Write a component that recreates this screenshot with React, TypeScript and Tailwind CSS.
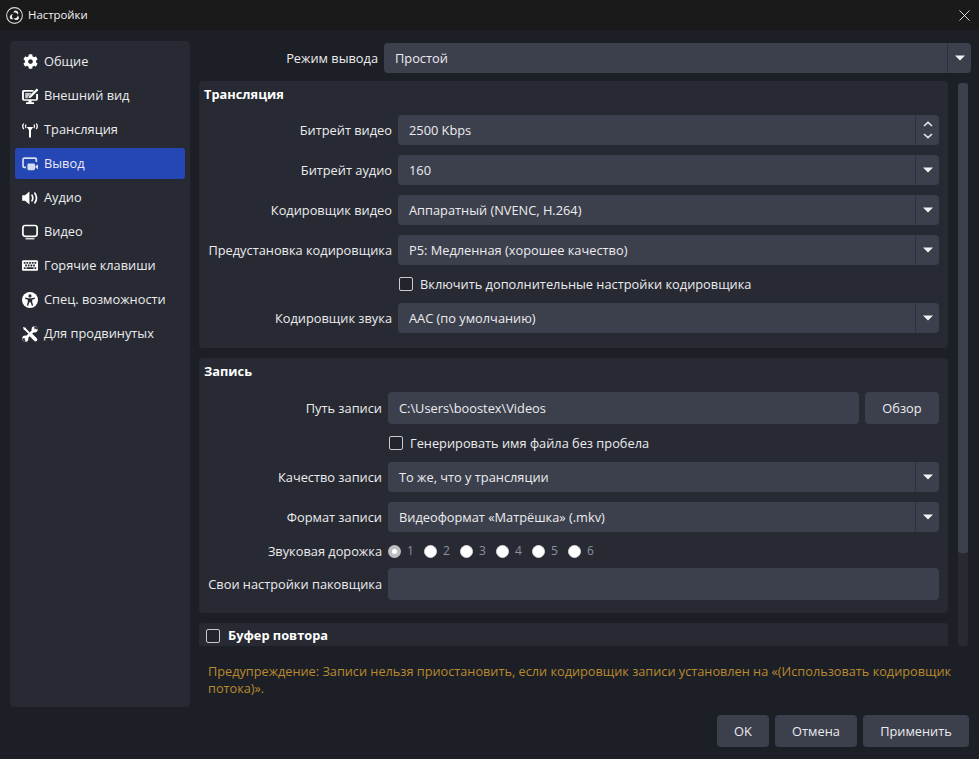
import type { ReactNode } from 'react';
import { FaCog, FaKeyboard } from 'react-icons/fa';

const ObsLogo = () => (
  <svg viewBox="0 0 32 32" className="w-[17px] h-[17px]" fill="none">
    <circle cx="16" cy="16" r="14.800" stroke="#d8d8d8" strokeWidth="2" />
    <path d="M17.500 6.500c3-.3 5.500 1.800 5.700 4.600.1 1.300-.3 2.500-1.100 3.400-.5-2.400-2.500-4.200-5.100-4.300-1.200-.1-2.300.2-3.200.8.600-2.300 1.900-4.300 3.700-4.500z" fill="#ececec" />
    <path d="M7.700 21.600c-1.400-2.700-.5-5.800 1.900-7.200 1.100-.7 2.400-.8 3.600-.6-1.900 1.600-2.600 4.200-1.400 6.600.5 1.100 1.400 1.900 2.400 2.400-2.300.8-5.600.4-6.500-1.200z" fill="#ececec" />
    <path d="M24.100 21.900c-1.600 2.500-4.800 3.300-7.200 1.900-1.100-.6-1.900-1.600-2.300-2.700 2.400.8 5 0 6.400-2.200.7-1 1-2.200.9-3.400 1.800 1.800 3.100 4.700 2.200 6.400z" fill="#ececec" />
  </svg>
);

const AppearanceIcon = () => (
  <svg viewBox="0 0 16 16" className="w-[16px] h-[16px]">
    <path d="M2 2h9.500v1.700H2.500a.6.6 0 0 0-.6.6v6.400c0 .3.300.6.600.6h11a.6.6 0 0 0 .6-.6V6H16v4.900a1.800 1.800 0 0 1-1.800 1.800H9.500V14.300H12V16H4v-1.700h2.500v-1.600H1.800A1.800 1.800 0 0 1 0 10.900V3.800A1.800 1.800 0 0 1 2 2z" fill="#fff" />
    <path d="M3.200 5h6.500l-3.200 3.300-.9 2H3.200z" fill="#c4c5c9" />
    <path d="M14.800.4 7.400 7.800l-.9 2.500 2.500-.9 7.400-7.400z" fill="#fff" />
  </svg>
);

const StreamIcon = () => (
  <svg viewBox="0 0 16 16" className="w-[16px] h-[16px]" fill="none" stroke="#fff">
    <path d="M4.800 5h6.400L9 8.300V15.500H7V8.300z" fill="#fff" stroke="none" />
    <path d="M4 2.500c-.8 1.200-.8 2.500 0 3.700M12 2.500c.8 1.200.8 2.500 0 3.700" strokeWidth="1.300" />
    <path d="M1.700 1.500C.4 3.400.4 5.300 1.700 7.200M14.300 1.500c1.300 1.900 1.300 3.800 0 5.700" strokeWidth="1.300" />
  </svg>
);

const OutputIcon = () => (
  <svg viewBox="0 0 16 16" className="w-[16px] h-[16px]" fill="#d5ddf2">
    <path d="M2.200 1.200h11a2 2 0 0 1 2 2V6h-1.700V3.500a.6.6 0 0 0-.6-.6H2.500a.6.6 0 0 0-.6.6v6.400c0 .3.300.6.600.6H4v1.700H2.200a2 2 0 0 1-2-2V3.200a2 2 0 0 1 2-2z" />
    <rect x="5.400" y="7.400" width="7.600" height="6.800" rx="1.400" />
    <path d="M13.400 10 16 8.400v4.800l-2.600-1.600z" />
  </svg>
);

const AudioIcon = () => (
  <svg viewBox="0 0 16 16" className="w-[16px] h-[16px]" fill="none">
    <path d="M.2 5.200h2.800L7.400 1.600v12.800L3 10.800H.2z" fill="#fff" />
    <path d="M10 5.200c1 1.800 1 3.800 0 5.600M12.900 3.200c2 3 2 6.600 0 9.600" stroke="#fff" strokeWidth="1.700" strokeLinecap="round" />
  </svg>
);

const VideoIcon = () => (
  <svg viewBox="0 0 16 16" className="w-[16px] h-[16px]" fill="none">
    <rect x=".9" y="1.500" width="14.200" height="10.800" rx="2.200" stroke="#fff" strokeWidth="1.700" />
    <path d="M3.600 14.800h8.800" stroke="#fff" strokeWidth="1.200" />
  </svg>
);

const AccessIcon = () => (
  <svg viewBox="0 0 16 16" className="w-[16px] h-[16px]">
    <circle cx="8" cy="8" r="8" fill="#fff" />
    <circle cx="8" cy="3.900" r="1.600" fill="#272a33" />
    <path d="M3.400 5.500 6.400 6.300h3.200l3-.8.4 1.300-2.800.9v2.200l1 3.500-1.300.4-1.300-3.500h-1.200l-1.300 3.500-1.300-.4 1-3.500V7.700l-2.800-.9z" fill="#272a33" />
  </svg>
);

const AdvancedIcon = () => (
  <svg viewBox="0 0 16 16" className="w-[16px] h-[16px]" fill="none">
    <path d="M2.500 2.500 13 13" stroke="#fff" strokeWidth="2" />
    <path d="M9.500 9.500 13.500 13.500" stroke="#fff" strokeWidth="3.600" strokeLinecap="round" />
    <path d="M1 1l2.800.8L3.800 3.800 1.800 3.800z" fill="#fff" />
    <path d="M3.500 12.500 12.500 3.500" stroke="#fff" strokeWidth="2.600" />
    <circle cx="12.700" cy="3.300" r="3.100" fill="#fff" />
    <circle cx="3.300" cy="12.700" r="3.100" fill="#fff" />
    <path d="M12.600 3.400 15.500 .5h-3.300z" fill="#272a33" />
    <path d="M13 3 15.800 .2v3.200z" fill="#272a33" />
    <path d="M3.400 12.600.5 15.500v-3.300z" fill="#272a33" />
    <path d="M3 13 .2 15.800h3.200z" fill="#272a33" />
  </svg>
);

const navItems = [
  { label: 'Общие', icon: <FaCog className="w-[15px] h-[15px] text-white" /> },
  { label: 'Внешний вид', icon: <AppearanceIcon /> },
  { label: 'Трансляция', icon: <StreamIcon /> },
  { label: 'Вывод', icon: <OutputIcon />, active: true },
  { label: 'Аудио', icon: <AudioIcon /> },
  { label: 'Видео', icon: <VideoIcon /> },
  { label: 'Горячие клавиши', icon: <FaKeyboard className="w-[17px] h-[17px] text-white" /> },
  { label: 'Спец. возможности', icon: <AccessIcon /> },
  { label: 'Для продвинутых', icon: <AdvancedIcon /> },
];

const Caret = () => (
  <svg viewBox="0 0 10 6" className="w-[10px] h-[6px]" fill="#f2f2f2">
    <path d="M0 .4h10L5 5.600z" />
  </svg>
);

const Select = ({ value }: { value: string }) => (
  <div className="flex-1 h-[30px] flex items-stretch bg-[#3c404d] rounded-[4px]">
    <div className="flex-1 flex items-center pl-[11px] pt-[1px] text-[#ececee]">{value}</div>
    <div className="w-[24px] flex items-center justify-center border-l border-[#2f323c]">
      <Caret />
    </div>
  </div>
);

const Spin = ({ value }: { value: string }) => (
  <div className="flex-1 h-[30px] flex items-stretch bg-[#3c404d] rounded-[4px]">
    <div className="flex-1 flex items-center pl-[11px] pt-[1px] text-[#ececee]">{value}</div>
    <div className="w-[24px] flex flex-col items-center justify-center gap-[6px] border-l border-[#2f323c]">
      <svg viewBox="0 0 10 6" className="w-[10px] h-[6px]" fill="none" stroke="#e6e6ea" strokeWidth="1.600">
        <path d="M1 5l4-3.600L9 5" />
      </svg>
      <svg viewBox="0 0 10 6" className="w-[10px] h-[6px]" fill="none" stroke="#e6e6ea" strokeWidth="1.600">
        <path d="M1 1l4 3.600L9 1" />
      </svg>
    </div>
  </div>
);

const Row = ({ label, width, children }: { label: string; width: string; children: ReactNode }) => (
  <div className="flex items-center gap-[6px]">
    <div className={`${width} shrink-0 text-right text-[#ececee] whitespace-nowrap leading-[18px]`}>{label}</div>
    {children}
  </div>
);

const Checkbox = () => <span className="w-[14px] h-[14px] rounded-[2px] bg-[#23252d] border border-[#c9c9ce] shrink-0" />;

const Radio = ({ n, checked }: { n: number; checked?: boolean }) => (
  <div className="flex items-center gap-[6px] text-[#8d919c]">
    <span
      className={
        checked
          ? 'w-[13px] h-[13px] rounded-full bg-[#bdbdc2] flex items-center justify-center'
          : 'w-[13px] h-[13px] rounded-full bg-white border border-[#d8d8dc]'
      }
    >
      {checked && <span className="block w-[5px] h-[5px] rounded-full bg-white" />}
    </span>
    <span className="w-[9px]">{n}</span>
  </div>
);

export default function App() {
  return (
    <div className="w-[979px] h-[759px] overflow-hidden flex flex-col bg-[#1d1f26] text-[12.8px] text-white font-['Open_Sans',sans-serif]">
      {/* Title bar */}
      <div className="h-[30px] shrink-0 bg-[#1a1a1a] flex items-center pl-[6px] pr-[9px] gap-[5px]">
        <ObsLogo />
        <span className="text-[11.4px] text-[#f2f2f2]">Настройки</span>
        <svg viewBox="0 0 12 12" className="ml-auto w-[11px] h-[11px]" fill="none" stroke="#e8e8e8" strokeWidth="1">
          <path d="M.5.5l11 11M11.500.5l-11 11" />
        </svg>
      </div>

      <div className="flex-1 flex pt-[11px] pl-[10px] min-h-0">
        {/* Sidebar */}
        <div className="w-[180px] h-[666px] shrink-0 bg-[#272a33] rounded-[4px] px-[5px] pt-[5px] flex flex-col gap-[3px]">
          {navItems.map(item => (
            <div
              key={item.label}
              className={`h-[31px] flex items-center pl-[7px] gap-[6px] rounded-[3px] ${item.active ? 'bg-[#2546b5]' : ''}`}
            >
              <span className="w-[16px] flex items-center justify-center">{item.icon}</span>
              <span className="text-[#ececee]">{item.label}</span>
            </div>
          ))}
        </div>

        {/* Content */}
        <div className="w-[780px] ml-[9px] flex flex-col">
          <div className="flex items-center gap-[6px] pt-[2px] pr-[8px]">
            <div className="w-[179px] pt-[1px] text-right text-[#ececee]">Режим вывода</div>
            <div className="flex-1 h-[30px] flex items-stretch bg-[#3c404d] rounded-[4px]">
              <div className="flex-1 flex items-center pl-[11px] pt-[1px] text-[#ececee]">Простой</div>
              <div className="w-[24px] flex items-center justify-center border-l border-[#2f323c]">
                <Caret />
              </div>
            </div>
          </div>

          <div className="flex mt-[8px] h-[565px]">
            <div className="w-[749px] flex flex-col gap-[10px] overflow-hidden">
              {/* Stream group */}
              <section className="bg-[#272a33] rounded-[4px] pr-[9px] pb-[15px] shrink-0">
                <div className="h-[34px] pb-[7px] flex items-center pl-[5px] font-bold">Трансляция</div>
                <div className="flex flex-col gap-[10px]">
                  <Row label="Битрейт видео" width="w-[193px]"><Spin value="2500 Kbps" /></Row>
                  <Row label="Битрейт аудио" width="w-[193px]"><Select value="160" /></Row>
                  <Row label="Кодировщик видео" width="w-[193px]"><Select value="Аппаратный (NVENC, H.264)" /></Row>
                  <Row label="Предустановка кодировщика" width="w-[193px]"><Select value="P5: Медленная (хорошее качество)" /></Row>
                  <div className="h-[18px] flex items-center gap-[7px] pl-[200px] text-[#ececee]">
                    <Checkbox />
                    <span className="pt-[1px]">Включить дополнительные настройки кодировщика</span>
                  </div>
                  <Row label="Кодировщик звука" width="w-[193px]"><Select value="AAC (по умолчанию)" /></Row>
                </div>
              </section>

              {/* Recording group */}
              <section className="bg-[#272a33] rounded-[4px] pr-[9px] pb-[13px] shrink-0">
                <div className="h-[34px] pb-[7px] flex items-center pl-[5px] font-bold">Запись</div>
                <div className="flex flex-col gap-[10px]">
                  <Row label="Путь записи" width="w-[183px]">
                    <div className="flex-1 h-[32px] flex items-center pl-[11px] pt-[1px] bg-[#3c404d] rounded-[4px] text-[#ececee]">
                      C:\Users\boostex\Videos
                    </div>
                    <div className="w-[74px] h-[32px] flex items-center justify-center pt-[1px] bg-[#3c404d] rounded-[4px] text-[#ececee]">
                      Обзор
                    </div>
                  </Row>
                  <div className="h-[18px] flex items-center gap-[7px] pl-[190px] text-[#ececee]">
                    <Checkbox />
                    <span className="pt-[1px]">Генерировать имя файла без пробела</span>
                  </div>
                  <Row label="Качество записи" width="w-[183px]"><Select value="То же, что у трансляции" /></Row>
                  <Row label="Формат записи" width="w-[183px]"><Select value="Видеоформат «Матрёшка» (.mkv)" /></Row>
                  <Row label="Звуковая дорожка" width="w-[183px]">
                    <div className="h-[18px] flex items-center gap-[8px] text-[12px]">
                      <Radio n={1} checked />
                      <Radio n={2} />
                      <Radio n={3} />
                      <Radio n={4} />
                      <Radio n={5} />
                      <Radio n={6} />
                    </div>
                  </Row>
                  <div className="-mt-[2px]">
                    <Row label="Свои настройки паковщика" width="w-[183px]">
                      <div className="flex-1 h-[32px] bg-[#3c404d] rounded-[4px]" />
                    </Row>
                  </div>
                </div>
              </section>

              {/* Replay buffer group */}
              <section className="bg-[#272a33] rounded-[4px] shrink-0 h-[60px] pt-[4px] pl-[7px]">
                <div className="flex items-center gap-[8px] font-bold h-[18px]">
                  <Checkbox />
                  Буфер повтора
                </div>
              </section>
            </div>

            {/* Scrollbar */}
            <div className="w-[21px] shrink-0 pl-[10px] pt-[2px]">
              <div className="w-[10px] h-full bg-[#272a33] rounded-[3px]">
                <div className="w-[10px] h-[470px] bg-[#3c404d] rounded-[3px]" />
              </div>
            </div>
          </div>

          <p className="mt-[17px] pl-[9px] pr-[20px] leading-[17px] text-[12.73px] text-[#b98a2e]">
            Предупреждение: Записи нельзя приостановить, если кодировщик записи установлен на «(Использовать кодировщик потока)».
          </p>
        </div>
      </div>

      {/* Footer buttons */}
      <div className="h-[52px] shrink-0 flex justify-end gap-[6px] pt-[8px] pr-[10px]">
        <div className="w-[52px] h-[32px] flex items-center justify-center pt-[1px] bg-[#3c404d] rounded-[4px] text-[#ececee]">OK</div>
        <div className="w-[82px] h-[32px] flex items-center justify-center pt-[1px] bg-[#3c404d] rounded-[4px] text-[#ececee]">Отмена</div>
        <div className="w-[106px] h-[32px] flex items-center justify-center pt-[1px] bg-[#3c404d] rounded-[4px] text-[#ececee]">Применить</div>
      </div>
    </div>
  );
}
